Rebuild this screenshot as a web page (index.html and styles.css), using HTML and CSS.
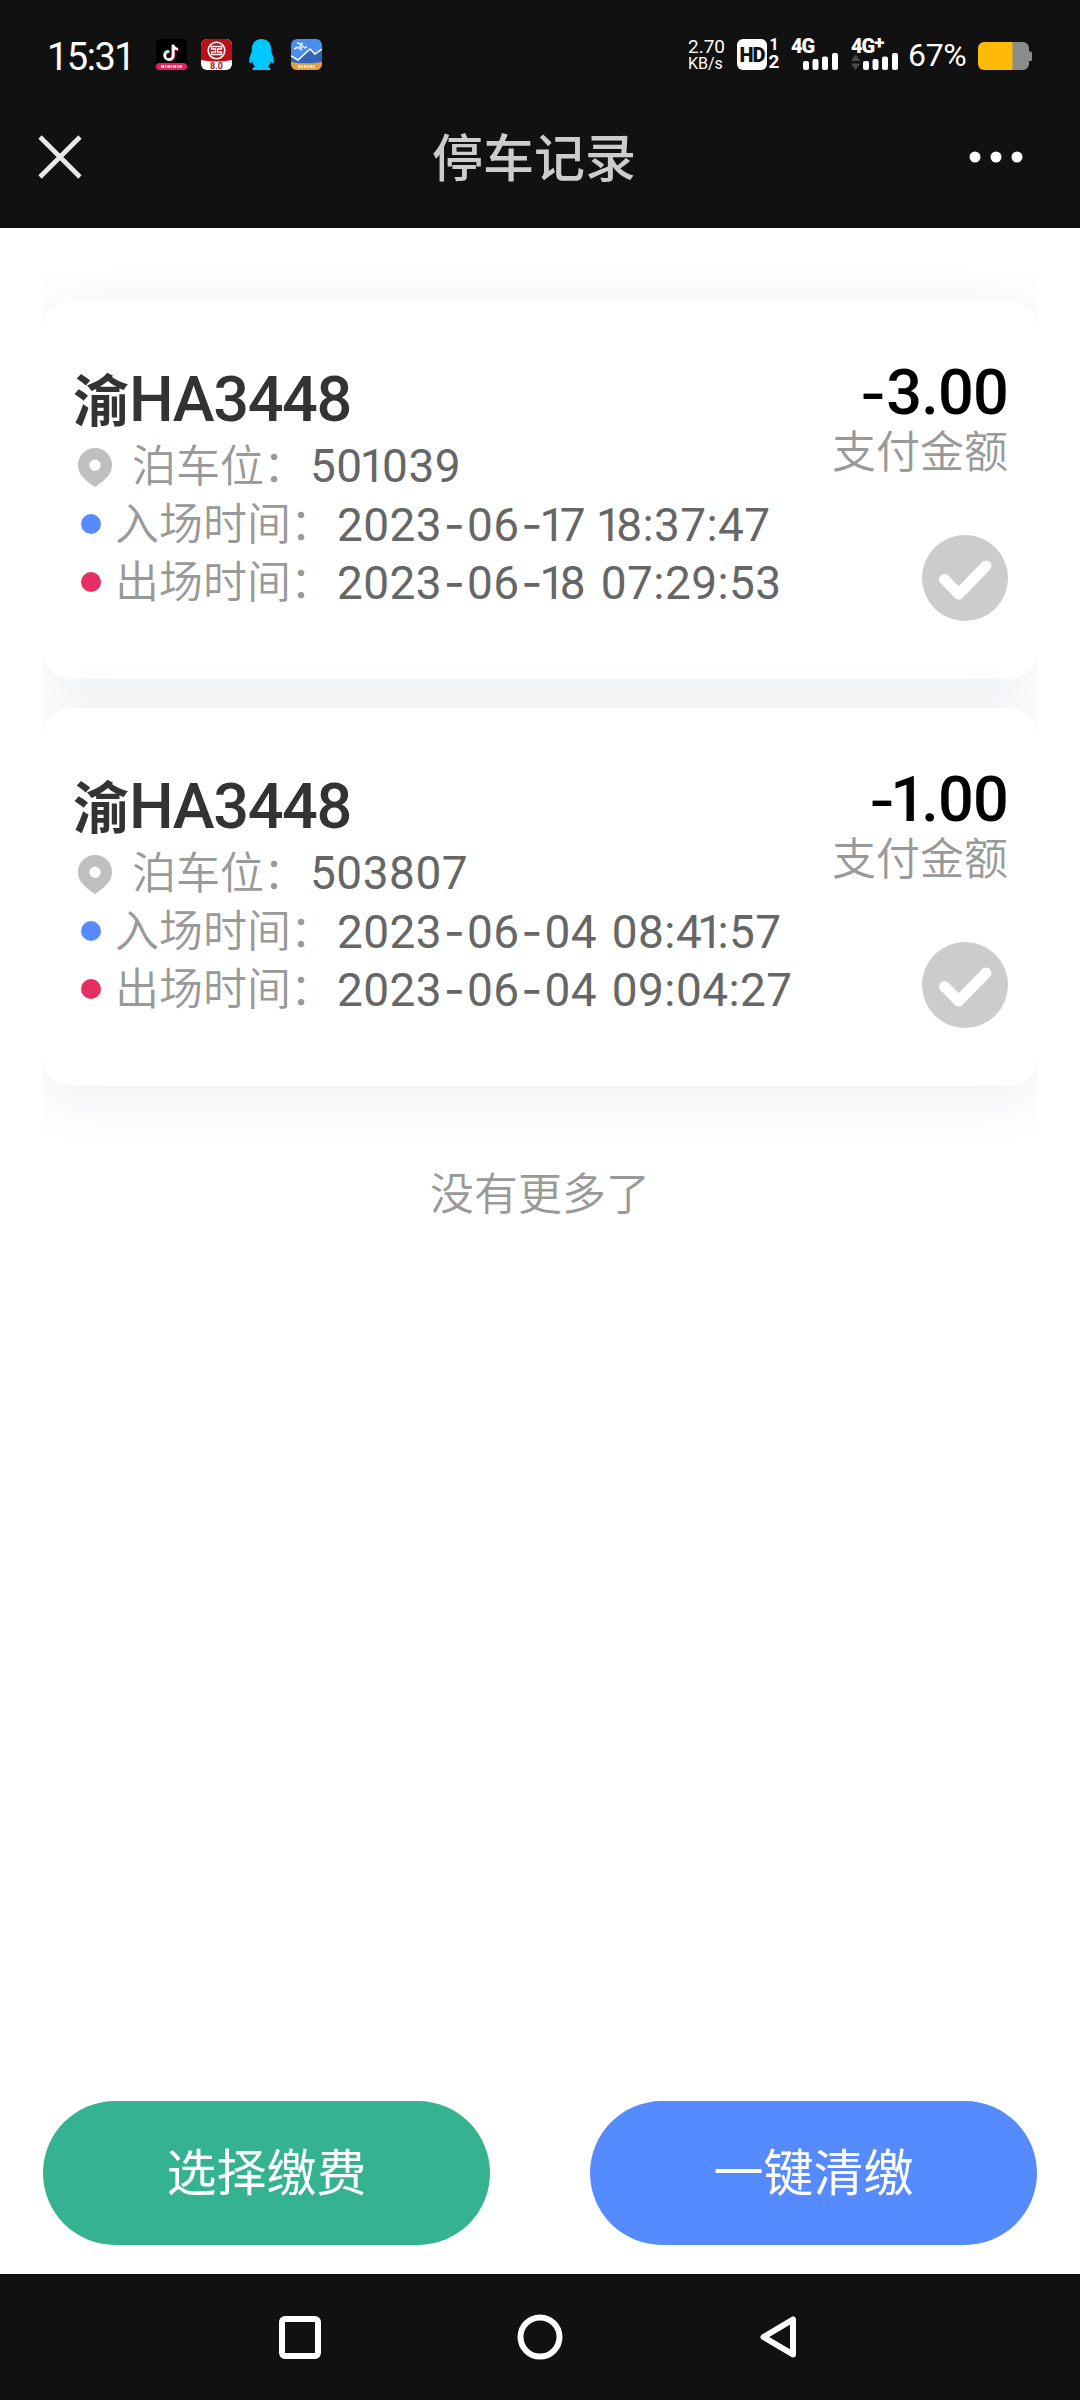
FILE: index.html
```html
<!DOCTYPE html>
<html lang="zh-CN">
<head>
<meta charset="utf-8">
<title>停车记录</title>
<link rel="stylesheet" href="styles.css">
</head>
<body>
<div class="screen">
  <header class="top">
    <div class="status">
      <span class="clock">15:31</span>
      <div class="apps">
        <svg width="31" height="31" viewBox="0 0 31 31">
          <rect width="31" height="31" rx="5" fill="#000"/>
          <path d="M17.3 6v10.500a4.200 4.200 0 1 1-4.200-4.200M17.300 6c.4 2.600 2 4 4.600 4.200" fill="none" stroke="#25f4ee" stroke-width="2.200" transform="translate(-.8 -.5)"/>
          <path d="M17.300 6v10.500a4.200 4.200 0 1 1-4.200-4.200M17.300 6c.4 2.600 2 4 4.600 4.200" fill="none" stroke="#fe2c55" stroke-width="2.200" transform="translate(.7 .6)"/>
          <path d="M17.300 6v10.500a4.200 4.200 0 1 1-4.200-4.200M17.300 6c.4 2.600 2 4 4.600 4.200" fill="none" stroke="#fff" stroke-width="2.200"/>
          <rect y="24" width="31" height="7" rx="3.500" fill="#e0245e"/>
          <path d="M5 27.500h21" stroke="#fff" stroke-width="2.600" stroke-dasharray="3 .8 1.500 .8" opacity=".8"/>
        </svg>
        <svg width="31" height="31" viewBox="0 0 31 31">
          <rect width="31" height="31" rx="6" fill="#fff"/>
          <path d="M0 21V6a6 6 0 0 1 6-6h19a6 6 0 0 1 6 6v15q-15.500 3-31 0z" fill="#bb1018"/>
          <circle cx="15.500" cy="11.500" r="8.300" fill="none" stroke="#fff" stroke-width="1.600"/>
          <path d="M10.500 7.500h10v2.500h-4v3h4v2.500h-10v-2.500h4v-3h-4z" fill="none" stroke="#fff" stroke-width="1.300"/>
          <text x="15.500" y="30" text-anchor="middle" class="badge-text">8.0</text>
        </svg>
        <svg width="31" height="31" viewBox="0 0 31 31">
          <path d="M15.500 0c5.800 0 9.700 4.300 9.700 10v3c1.400 2.500 2.600 5.500 2.600 9 0 2.500-1.200 3.200-3 .5-.6 2.200-1.500 3.800-2.800 5.200 1.700.6 2.600 1.400 2.600 3.300H6.400c0-1.900.9-2.700 2.600-3.300-1.300-1.400-2.200-3-2.800-5.200-1.800 2.700-3 2-3-.5 0-3.500 1.200-6.500 2.600-9v-3C5.800 4.300 9.700 0 15.500 0z" fill="#00c8ff"/>
        </svg>
        <svg width="31" height="31" viewBox="0 0 31 31">
          <rect width="31" height="31" rx="6" fill="#4a8df0"/>
          <path d="M0 17l7 4 12-11 5 5 7-5v14H0z" fill="#3565b8"/>
          <path d="M0 17l7 4 12-11 5 5 7-5" fill="none" stroke="#fff" stroke-width="1.500"/>
          <path d="M0 23q15 3 31 0v2a6 6 0 0 1-6 6H6a6 6 0 0 1-6-6z" fill="#e8a03c"/>
          <path d="M3 10l4-2M6 4l5 1-3 4 3 2M10 9l3-2M13 9l3-1" fill="none" stroke="#fff" stroke-width="1.500"/>
          <path d="M7 27.500h17" stroke="#fff" stroke-width="2.500" stroke-dasharray="2.500 1 1.500 1" opacity=".85"/>
        </svg>
      </div>
      <div class="signals">
        <div class="speed"><span>2.70</span><span class="unit">KB/s</span></div>
        <div class="hd"><b class="hd-box">HD</b><div class="sims"><b>1</b><b>2</b></div></div>
        <div class="net">
          <b>4G</b>
          <svg width="48" height="17" viewBox="0 0 48 17" fill="#fff"><rect x="12" y="8" width="6" height="9" rx="2"/><rect x="21.500" y="6" width="6" height="11" rx="2"/><rect x="31" y="3.500" width="6" height="13.500" rx="2"/><rect x="41" y="0" width="6" height="17" rx="2"/></svg>
        </div>
        <div class="net net-plus">
          <b>4G<sup>+</sup></b>
          <svg width="48" height="17" viewBox="0 0 48 17" fill="#fff"><path d="M0 8l4.700-6.500L9.400 8zM0 10.500l4.700 6.500 4.700-6.500z" fill="#4a4a4a"/><rect x="12" y="8" width="6" height="9" rx="2"/><rect x="21.500" y="6" width="6" height="11" rx="2"/><rect x="31" y="3.500" width="6" height="13.500" rx="2"/><rect x="41" y="0" width="6" height="17" rx="2"/></svg>
        </div>
        <span class="percent">67%</span>
        <svg class="battery" width="54" height="28" viewBox="0 0 54 28"><path d="M34 0h11a6 6 0 0 1 6 6v3.500h1.500a1.500 1.500 0 0 1 1.500 1.500v6.500a1.500 1.500 0 0 1-1.500 1.500H51v3a6 6 0 0 1-6 6H34z" fill="#8b8b8b"/><path d="M34.500 0H6a6 6 0 0 0-6 6v16a6 6 0 0 0 6 6h28.500z" fill="#ffb909"/></svg>
      </div>
    </div>
    <div class="titlebar">
      <svg width="44" height="44" viewBox="0 0 44 44"><path d="M2 2l40 40M42 2L2 42" stroke="#e9e9e9" stroke-width="4.600"/></svg>
      <h1>停车记录</h1>
      <svg width="54" height="12" viewBox="0 0 54 12" fill="#fff"><circle cx="6" cy="6" r="5.500"/><circle cx="27" cy="6" r="5.500"/><circle cx="48" cy="6" r="5.500"/></svg>
    </div>
  </header>

  <main class="content">
    <section class="list">
      <article class="card">
        <div class="info">
          <h2>渝<span class="plate">HA3448</span></h2>
          <div class="row">
            <svg class="pin" width="34" height="39" viewBox="0 0 34 39"><path fill-rule="evenodd" d="M17 0a17 17 0 0 1 17 17c0 9-6 14.500-17 22C6 31.500 0 26 0 17A17 17 0 0 1 17 0zm0 11.500a5.700 5.700 0 1 0 0 11.400 5.700 5.700 0 0 0 0-11.400z" fill="#bfbfbf"/></svg>
            <span class="label">泊车位<i class="colon">：</i></span><span class="value spot">50<i class="one">1</i>039</span>
          </div>
          <div class="row"><i class="dot enter"></i><span class="label">入场时间<i class="colon">：</i></span><span class="value">2023<i class="dash">-</i>06<i class="dash">-</i><i class="one">1</i>7 <i class="one">1</i>8:37:47</span></div>
          <div class="row"><i class="dot leave"></i><span class="label">出场时间<i class="colon">：</i></span><span class="value">2023<i class="dash">-</i>06<i class="dash">-</i><i class="one">1</i>8 07:29:53</span></div>
        </div>
        <div class="pay">
          <div class="amount"><i class="dash">-</i>3.00</div>
          <div class="caption">支付金额</div>
          <svg class="check" width="86" height="86" viewBox="0 0 86 86"><circle cx="43" cy="43" r="43" fill="#ccc"/><path d="M22.500 44.500l14.200 14.500L64 31" fill="none" stroke="#fff" stroke-width="11" stroke-linecap="round" stroke-linejoin="round"/></svg>
        </div>
      </article>
      <article class="card">
        <div class="info">
          <h2>渝<span class="plate">HA3448</span></h2>
          <div class="row">
            <svg class="pin" width="34" height="39" viewBox="0 0 34 39"><path fill-rule="evenodd" d="M17 0a17 17 0 0 1 17 17c0 9-6 14.500-17 22C6 31.500 0 26 0 17A17 17 0 0 1 17 0zm0 11.500a5.700 5.700 0 1 0 0 11.400 5.700 5.700 0 0 0 0-11.400z" fill="#bfbfbf"/></svg>
            <span class="label">泊车位<i class="colon">：</i></span><span class="value spot">503807</span>
          </div>
          <div class="row"><i class="dot enter"></i><span class="label">入场时间<i class="colon">：</i></span><span class="value">2023<i class="dash">-</i>06<i class="dash">-</i>04 08:4<i class="one">1</i>:57</span></div>
          <div class="row"><i class="dot leave"></i><span class="label">出场时间<i class="colon">：</i></span><span class="value">2023<i class="dash">-</i>06<i class="dash">-</i>04 09:04:27</span></div>
        </div>
        <div class="pay">
          <div class="amount"><i class="dash">-</i><i class="one">1</i>.00</div>
          <div class="caption">支付金额</div>
          <svg class="check" width="86" height="86" viewBox="0 0 86 86"><circle cx="43" cy="43" r="43" fill="#ccc"/><path d="M22.500 44.500l14.200 14.500L64 31" fill="none" stroke="#fff" stroke-width="11" stroke-linecap="round" stroke-linejoin="round"/></svg>
        </div>
      </article>
    </section>
    <p class="end">没有更多了</p>
    <div class="actions">
      <button class="btn green">选择缴费</button>
      <button class="btn blue">一键清缴</button>
    </div>
  </main>

  <nav class="nav">
    <svg width="46" height="46" viewBox="0 0 46 46"><rect x="5" y="5" width="36" height="37" rx="3" fill="none" stroke="#fff" stroke-width="6"/></svg>
    <svg width="46" height="46" viewBox="0 0 46 46"><circle cx="23" cy="23" r="19.500" fill="none" stroke="#fff" stroke-width="6"/></svg>
    <svg width="46" height="46" viewBox="0 0 46 46"><path d="M6.500 23L36 5.500v35z" fill="none" stroke="#fff" stroke-width="6" stroke-linejoin="round"/></svg>
  </nav>
</div>
</body>
</html>
```

FILE: styles.css
```css
* { box-sizing: border-box; margin: 0; padding: 0; }

body {
  width: 1080px;
  background: #fff;
  font-family: Roboto, "Noto Sans CJK SC", sans-serif;
}

i { font-style: normal; }
svg { display: block; flex: none; }

.screen { display: flex; flex-direction: column; height: 2400px; overflow: hidden; }

/* status bar and title */
.top { height: 228px; background: #111; color: #fff; }
.status { display: flex; align-items: flex-start; height: 108px; padding: 39px 48px 0 47px; }
.clock { width: 109px; font-size: 38px; line-height: 36px; letter-spacing: -1.5px; white-space: nowrap; }
.apps { display: flex; gap: 14px; }
.badge-text { font: 700 9px Roboto, sans-serif; fill: #b01018; }
.signals { display: flex; margin-left: auto; }
.speed { display: flex; flex-direction: column; width: 49px; font-size: 19px; line-height: 16px; white-space: nowrap; }
.speed .unit { font-size: 16px; line-height: 18px; }
.hd { display: flex; width: 54px; }
.hd-box { width: 30px; height: 31px; border-radius: 6px; background: #fff; color: #111; font-size: 20px; line-height: 32px; font-weight: 900; text-align: center; letter-spacing: -1px; }
.sims { display: flex; flex-direction: column; width: 14px; text-align: center; }
.sims b { font-size: 16px; line-height: 12px; }
.sims b + b { font-size: 19px; line-height: 22px; }
.net { width: 60px; height: 31px; }
.net b { display: block; height: 14px; font-size: 20px; line-height: 15px; font-weight: 900; letter-spacing: -1px; white-space: nowrap; }
.net sup { font-size: 19px; line-height: 0; vertical-align: 4px; }
.net-plus { width: 57px; }
.percent { width: 70px; font-size: 32px; line-height: 33px; font-weight: 400; letter-spacing: -.3px; }
.battery { margin-top: 3px; }
.titlebar { display: flex; align-items: center; justify-content: space-between; height: 97px; padding: 0 57px 0 38px; }
.titlebar h1 { font-size: 51px; line-height: 60px; font-weight: 500; color: #ccc; padding: 7px 0 0 17px; }

/* records */
.content { display: flex; flex-direction: column; flex: 1; background: #fff; padding: 43px 43px 29px; }
.list { display: flex; flex-direction: column; gap: 29px; padding: 30px 0 64px; overflow: hidden; }
.card {
  display: flex;
  justify-content: space-between;
  height: 378px;
  padding: 57px 29px 0 30px;
  border-radius: 28px;
  background: #fff;
  box-shadow: 0 9px 60px rgba(0, 60, 90, .085);
}
.info h2 { display: flex; align-items: baseline; height: 79px; line-height: 84px; font-size: 56px; font-weight: 700; color: #333; }
.plate { font-size: 63px; font-weight: 550; letter-spacing: -1.4px; }
.row { display: flex; align-items: center; height: 58px; line-height: 58px; white-space: nowrap; }
.pin { margin: 2px 20px 0 5px; }
.label { font-size: 44px; font-weight: 350; color: #999; padding-top: 3px; line-height: 55px; }
.colon { display: inline-block; width: 46px; text-indent: -1px; }
.value { font-size: 46px; font-weight: 400; color: #666; letter-spacing: .4px; word-spacing: 3px; }
.spot { letter-spacing: .5px; }
.value .dash { display: inline-block; width: 25px; text-align: center; font-family: Inter, sans-serif; font-weight: 400; }
.value .one { margin: 0 -6px 0 -5px; }
.spot .one { margin: 0 -4px 0 -3px; }
.dot { flex: none; width: 20px; height: 20px; margin: 0 14px 0 8px; border-radius: 50%; }
.enter { background: #568bff; }
.leave { background: #e62e62; }

.pay { display: flex; flex-direction: column; align-items: flex-end; }
.amount { height: 69px; line-height: 70px; font-size: 63px; font-weight: 550; color: #000; letter-spacing: -.8px; }
.amount .dash { font-family: Inter, sans-serif; font-size: 58px; letter-spacing: 0; }
.amount .one { margin: 0 -4px 0 -5px; }
.caption { height: 52px; font-size: 44px; line-height: 53px; font-weight: 350; color: #999; }
.check { margin-top: 56px; }

.end { font-size: 44px; line-height: 64px; font-weight: 350; text-align: center; color: #999; margin-top: 13px; }
.actions { display: flex; justify-content: space-between; margin-top: auto; }
.btn { width: 447px; height: 144px; border: 0; border-radius: 72px; color: #fff; font-family: "Noto Sans CJK SC", sans-serif; font-size: 50px; font-weight: 400; padding-bottom: 8px; }
.green { background: #34b291; }
.blue { background: #568bff; }

/* system navigation */
.nav { display: flex; align-items: center; justify-content: center; gap: 194px; height: 126px; background: #111; }
```
